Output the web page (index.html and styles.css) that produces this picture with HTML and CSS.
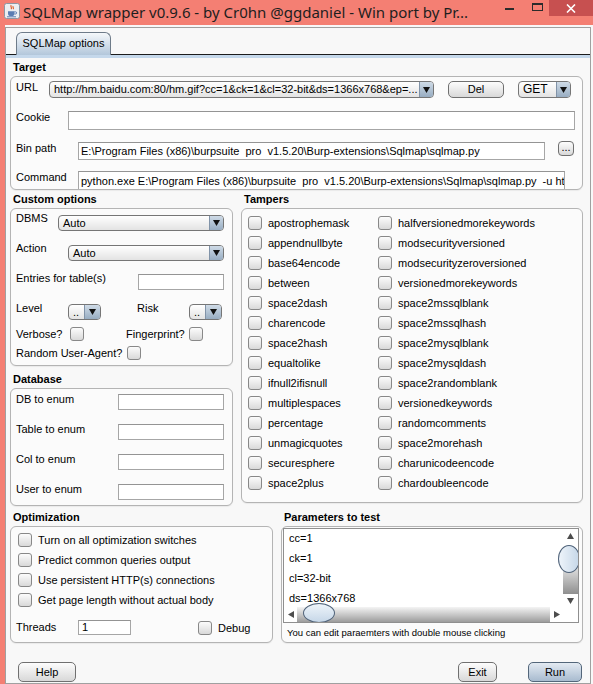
FILE: index.html
```html
<!DOCTYPE html>
<html>
<head>
<meta charset="utf-8">
<link rel="stylesheet" href="styles.css">
</head>
<body>
<div class="titlebar">
  <svg class="app-icon" width="16" height="16" viewBox="0 0 16 16">
    <rect x="0.5" y="0.5" width="15" height="15" rx="2" fill="#eceef1" stroke="#8d97a3"/>
    <path d="M7.2 2.2c-1.2 1.4 1.1 2.3 0 4M9.2 3.2c-.8 1 .8 1.8 0 3" stroke="#e0602c" stroke-width="1.2" fill="none"/>
    <path d="M4 8.2h6.5v2.2a2.8 2.8 0 0 1-2.8 2.6H6.8A2.8 2.8 0 0 1 4 10.4z" fill="#5a7db3"/>
    <path d="M10.5 8.8h1a1.1 1.1 0 0 1 0 2.2h-1" stroke="#5a7db3" fill="none"/>
    <path d="M3 13.8h9" stroke="#5a7db3"/>
  </svg>
  <span class="title">SQLMap wrapper v0.9.6 - by Cr0hn @ggdaniel - Win port by Pr...</span>
  <div class="caption">
    <span class="cmin"></span>
    <span class="cmax"></span>
    <span class="cclose"><svg width="10" height="9" viewBox="0 0 10 9"><path d="M1 0.5l8 8M9 0.5l-8 8" stroke="#fff" stroke-width="1.6"/></svg></span>
  </div>
</div>
<div class="client">
  <div class="lborder"></div>
  <div class="tabpane">
    <div class="tabs"><div class="tab">SQLMap options</div></div>
    <div class="tabstrip"></div>
    <div class="content">
      <div class="sec-title">Target</div>
      <div class="group target-box">
        <div class="row r-url">
          <span class="lbl w33">URL</span>
          <div class="combo w385"><span class="val">http://hm.baidu.com:80/hm.gif?cc=1&amp;ck=1&amp;cl=32-bit&amp;ds=1366x768&amp;ep=...</span><span class="arr"><svg width="7" height="6" viewBox="0 0 7 6"><path d="M0 0h7L3.5 6z" fill="#111"/></svg></span></div>
          <div class="btn btn-del">Del</div>
          <div class="combo w53 get"><span class="val">GET</span><span class="arr"><svg width="7" height="6" viewBox="0 0 7 6"><path d="M0 0h7L3.5 6z" fill="#111"/></svg></span></div>
        </div>
        <div class="row r-cookie">
          <span class="lbl w52">Cookie</span>
          <div class="field f-cookie"></div>
        </div>
        <div class="row r-bin">
          <span class="lbl w62">Bin path</span>
          <div class="field f-bin">E:\Program Files (x86)\burpsuite  pro  v1.5.20\Burp-extensions\Sqlmap\sqlmap.py</div>
          <div class="btn btn-dots">...</div>
        </div>
        <div class="row r-cmd">
          <span class="lbl w62">Command</span>
          <div class="field f-cmd">python.exe E:\Program Files (x86)\burpsuite  pro  v1.5.20\Burp-extensions\Sqlmap\sqlmap.py  -u http</div>
        </div>
      </div>

      <div class="columns">
        <div class="col-left">
          <div class="sec-title">Custom options</div>
          <div class="group custom-box">
            <div class="row r30">
              <span class="lbl w42">DBMS</span>
              <div class="combo w166 mt3"><span class="val">Auto</span><span class="arr"><svg width="7" height="6" viewBox="0 0 7 6"><path d="M0 0h7L3.5 6z" fill="#111"/></svg></span></div>
            </div>
            <div class="row r30">
              <span class="lbl w52">Action</span>
              <div class="combo w156 mt3"><span class="val">Auto</span><span class="arr"><svg width="7" height="6" viewBox="0 0 7 6"><path d="M0 0h7L3.5 6z" fill="#111"/></svg></span></div>
            </div>
            <div class="row r30">
              <span class="lbl w122">Entries for table(s)</span>
              <div class="field f-entries"></div>
            </div>
            <div class="row r24">
              <span class="lbl w52">Level</span>
              <div class="combo small mt2"><span class="val">..</span><span class="arr"><svg width="7" height="6" viewBox="0 0 7 6"><path d="M0 0h7L3.5 6z" fill="#111"/></svg></span></div>
              <span class="lbl w52 ml36">Risk</span>
              <div class="combo small mt2"><span class="val">..</span><span class="arr"><svg width="7" height="6" viewBox="0 0 7 6"><path d="M0 0h7L3.5 6z" fill="#111"/></svg></span></div>
            </div>
            <div class="row rcheck">
              <span class="lbl w54">Verbose?</span>
              <span class="cb"></span>
              <span class="lbl w63 ml42">Fingerprint?</span>
              <span class="cb"></span>
            </div>
            <div class="row rcheck mt3">
              <span class="lbl w111">Random User-Agent?</span>
              <span class="cb"></span>
            </div>
          </div>

          <div class="sec-title db-title">Database</div>
          <div class="group db-box">
            <div class="row rdb"><span class="lbl w102">DB to enum</span><div class="field f-db"></div></div>
            <div class="row rdb"><span class="lbl w102">Table to enum</span><div class="field f-db"></div></div>
            <div class="row rdb"><span class="lbl w102">Col to enum</span><div class="field f-db"></div></div>
            <div class="row rdb"><span class="lbl w102">User to enum</span><div class="field f-db"></div></div>
          </div>
        </div>

        <div class="col-right">
          <div class="sec-title">Tampers</div>
          <div class="group tampers-box">
            <div class="titem"><span class="cb"></span><span class="tl">apostrophemask</span></div>
            <div class="titem"><span class="cb"></span><span class="tl">halfversionedmorekeywords</span></div>
            <div class="titem"><span class="cb"></span><span class="tl">appendnullbyte</span></div>
            <div class="titem"><span class="cb"></span><span class="tl">modsecurityversioned</span></div>
            <div class="titem"><span class="cb"></span><span class="tl">base64encode</span></div>
            <div class="titem"><span class="cb"></span><span class="tl">modsecurityzeroversioned</span></div>
            <div class="titem"><span class="cb"></span><span class="tl">between</span></div>
            <div class="titem"><span class="cb"></span><span class="tl">versionedmorekeywords</span></div>
            <div class="titem"><span class="cb"></span><span class="tl">space2dash</span></div>
            <div class="titem"><span class="cb"></span><span class="tl">space2mssqlblank</span></div>
            <div class="titem"><span class="cb"></span><span class="tl">charencode</span></div>
            <div class="titem"><span class="cb"></span><span class="tl">space2mssqlhash</span></div>
            <div class="titem"><span class="cb"></span><span class="tl">space2hash</span></div>
            <div class="titem"><span class="cb"></span><span class="tl">space2mysqlblank</span></div>
            <div class="titem"><span class="cb"></span><span class="tl">equaltolike</span></div>
            <div class="titem"><span class="cb"></span><span class="tl">space2mysqldash</span></div>
            <div class="titem"><span class="cb"></span><span class="tl">ifnull2ifisnull</span></div>
            <div class="titem"><span class="cb"></span><span class="tl">space2randomblank</span></div>
            <div class="titem"><span class="cb"></span><span class="tl">multiplespaces</span></div>
            <div class="titem"><span class="cb"></span><span class="tl">versionedkeywords</span></div>
            <div class="titem"><span class="cb"></span><span class="tl">percentage</span></div>
            <div class="titem"><span class="cb"></span><span class="tl">randomcomments</span></div>
            <div class="titem"><span class="cb"></span><span class="tl">unmagicquotes</span></div>
            <div class="titem"><span class="cb"></span><span class="tl">space2morehash</span></div>
            <div class="titem"><span class="cb"></span><span class="tl">securesphere</span></div>
            <div class="titem"><span class="cb"></span><span class="tl">charunicodeencode</span></div>
            <div class="titem"><span class="cb"></span><span class="tl">space2plus</span></div>
            <div class="titem"><span class="cb"></span><span class="tl">chardoubleencode</span></div>
          </div>
        </div>
      </div>

      <div class="bottom">
        <div class="col-opt">
          <div class="sec-title">Optimization</div>
          <div class="group opt-box">
            <div class="oitem"><span class="cb"></span><span class="tl">Turn on all optimization switches</span></div>
            <div class="oitem"><span class="cb"></span><span class="tl">Predict common queries output</span></div>
            <div class="oitem"><span class="cb"></span><span class="tl">Use persistent HTTP(s) connections</span></div>
            <div class="oitem"><span class="cb"></span><span class="tl">Get page length without actual body</span></div>
            <div class="row rthreads">
              <span class="lbl w62">Threads</span>
              <div class="field f-threads">1</div>
              <span class="cb ml67"></span>
              <span class="tl">Debug</span>
            </div>
          </div>
        </div>
        <div class="col-params">
          <div class="sec-title">Parameters to test</div>
          <div class="group params-box">
            <div class="plist">
              <div class="pitems">
                <div class="pitem">cc=1</div>
                <div class="pitem">ck=1</div>
                <div class="pitem">cl=32-bit</div>
                <div class="pitem">ds=1366x768</div>
              </div>
              <div class="vsb">
                <svg class="sarr" width="7" height="6" viewBox="0 0 7 6"><path d="M3.5 0L7 6H0z" fill="#4d4d4d"/></svg>
                <div class="vtrack"><div class="vthumb"></div></div>
                <svg class="sarr" width="7" height="6" viewBox="0 0 7 6"><path d="M0 0h7L3.5 6z" fill="#4d4d4d"/></svg>
              </div>
              <div class="hsb">
                <svg class="sarr" width="6" height="7" viewBox="0 0 6 7"><path d="M0 3.5L6 0v7z" fill="#4d4d4d"/></svg>
                <div class="htrack"><div class="hthumb"></div></div>
                <svg class="sarr" width="6" height="7" viewBox="0 0 6 7"><path d="M6 3.5L0 0v7z" fill="#4d4d4d"/></svg>
              </div>
              <div class="corner"></div>
            </div>
            <div class="pnote">You can edit paraemters with double mouse clicking</div>
          </div>
        </div>
      </div>

      <div class="buttons">
        <div class="btn btn-help">Help</div>
        <div class="btn btn-exit">Exit</div>
        <div class="btn btn-run">Run</div>
      </div>
    </div>
  </div>
</div>
</body>
</html>
```
FILE: styles.css
```css
* { box-sizing: border-box; }
html, body { margin: 0; padding: 0; }
body {
  width: 593px;
  height: 684px;
  overflow: hidden;
  font-family: "Liberation Sans", Arial, sans-serif;
  font-size: 11px;
  color: #000;
  background: #f8f8f8;
}

/* title bar */
.titlebar {
  height: 25px;
  background: #f47f73;
  display: flex;
  align-items: flex-start;
}
.app-icon { flex: none; margin: 3px 0 0 4px; }
.title {
  flex: none;
  margin-left: 3px;
  font-family: "Noto Sans", "Open Sans", sans-serif;
  font-size: 15px;
  line-height: 24px;
  color: #1e1e1e;
  white-space: nowrap;
}
.caption { margin-left: auto; display: flex; align-items: flex-start; }
.cmin { width: 9px; height: 2px; margin: 8px 18px 0 0; background: #2b2b2b; }
.cmax { width: 11px; height: 8px; margin: 3px 6px 0 0; border: 1px solid #2b2b2b; border-top-width: 2px; }
.cclose {
  width: 44px; height: 16px; background: #c75050;
  display: flex; align-items: center; justify-content: center;
}

/* client / tab pane */
.client { display: flex; height: 659px; }
.lborder { width: 5px; flex: none; background: #f47f73; }
.tabpane {
  width: 586px;
  height: 657px;
  margin-top: 2px;
  border: 1px solid #a0a0a0;
  display: flex;
  flex-direction: column;
  background: #f8f8f8;
}
.tabs {
  flex: none;
  height: 27px;
  border-bottom: 1px solid #1c1c1c;
  display: flex;
  align-items: flex-end;
  padding-left: 10px;
}
.tab {
  width: 95px;
  height: 23px;
  margin-bottom: -1px;
  border: 1px solid #6e7b89;
  border-bottom: none;
  border-radius: 6px 6px 0 0;
  background: linear-gradient(#f5f8fb, #b3c7db);
  text-align: center;
  line-height: 21px;
}
.tabstrip { flex: none; height: 3px; background: #c5d8eb; }
.content { padding: 0 7px 0 4px; }

/* sections */
.sec-title {
  height: 18px;
  padding: 3px 0 0 3px;
  line-height: 13px;
  font-weight: bold;
  white-space: nowrap;
}
.group {
  border: 1px solid #b4b4b4;
  border-radius: 6px;
  background: #fbfbfb;
  box-shadow: 0 1px 1px rgba(0,0,0,0.06);
}

.row { display: flex; align-items: flex-start; }
.lbl { flex: none; line-height: 13px; white-space: nowrap; }
.w33 { width: 33px; } .w42 { width: 42px; } .w52 { width: 52px; } .w54 { width: 54px; }
.w62 { width: 62px; } .w63 { width: 63px; } .w102 { width: 102px; } .w111 { width: 111px; }
.w122 { width: 122px; }
.ml36 { margin-left: 36px; } .ml42 { margin-left: 42px; } .ml67 { margin-left: 67px; }
.mt2 { margin-top: 2px; } .mt3 { margin-top: 3px; }

/* controls */
.field {
  flex: none;
  background: #fff;
  border: 1px solid #a6a6a6;
  border-top-color: #949494;
  padding: 0 2px;
  white-space: pre;
  overflow: hidden;
}
.combo {
  flex: none;
  display: flex;
  height: 16px;
  border: 1px solid #767676;
  border-radius: 4px;
  background: linear-gradient(#ffffff, #e3e3e3);
  overflow: hidden;
}
.combo .val {
  flex: 1;
  padding-left: 4px;
  line-height: 14px;
  white-space: nowrap;
  overflow: hidden;
}
.combo .arr {
  flex: none;
  width: 14px;
  border-left: 1px solid #8193a8;
  background: linear-gradient(#cfdbe7, #98adc2);
  display: flex;
  align-items: center;
  justify-content: center;
}
.combo.small { width: 33px; }
.combo.small .arr { width: 16px; }
.w385 { width: 385px; height: 17px; }
.w53 { width: 53px; height: 17px; }
.w166 { width: 166px; }
.w156 { width: 156px; }
.get { margin-left: 14px; }
.get .val { font-size: 12px; }
.w385 .val, .w53 .val { line-height: 15px; }

.btn {
  flex: none;
  border: 1px solid #707070;
  border-radius: 5px;
  background: linear-gradient(#fdfdfd, #d8d8d8);
  text-align: center;
}
.cb {
  flex: none;
  width: 14px;
  height: 14px;
  border: 1px solid #888;
  border-radius: 3px;
  background: linear-gradient(#fcfcfc, #d9d9d9);
}
.tl { margin-left: 6px; white-space: nowrap; }

/* target */
.target-box { height: 114px; padding: 4px 0 0 5px; overflow: hidden; }
.r-url { height: 17px; }
.btn-del { margin-left: 14px; width: 56px; height: 17px; line-height: 15px; }
.r-cookie { margin-top: 13px; height: 19px; }
.f-cookie { width: 507px; height: 19px; }
.r-bin { margin-top: 12px; height: 18px; }
.f-bin { width: 467px; height: 18px; line-height: 16px; }
.btn-dots { margin: -1px 0 0 13px; width: 16px; height: 15px; line-height: 11px; border-radius: 4px; }
.r-cmd { margin-top: 11px; height: 22px; }
.f-cmd { width: 487px; height: 22px; line-height: 18px; }

/* columns */
.columns { display: flex; gap: 8px; }
.col-left { width: 223px; flex: none; }
.col-right { width: 342px; flex: none; }

.custom-box { height: 158px; padding: 3px 0 0 5px; }
.r30 { height: 30px; }
.r24 { height: 24px; }
.rcheck { height: 16px; align-items: center; }
.f-entries { width: 86px; height: 16px; margin-top: 2px; }

.db-title { margin-top: 4px; }
.db-box { height: 118px; padding: 4px 0 0 5px; display: flex; flex-direction: column; gap: 13px; }
.rdb { height: 17px; }
.f-db { width: 106px; height: 16px; margin-top: 1px; }

.tampers-box {
  height: 295px;
  padding: 4px 0 0 6px;
  display: grid;
  grid-template-columns: 130px auto;
  grid-auto-rows: 20px;
  align-content: start;
}
.titem { display: flex; align-items: center; }

/* bottom */
.bottom { margin-top: 2px; display: flex; gap: 8px; }
.col-opt { width: 263px; flex: none; }
.col-params { width: 302px; flex: none; }
.opt-box { height: 117px; padding: 3px 0 0 7px; }
.oitem { height: 20px; display: flex; align-items: center; }
.rthreads { margin: 9px 0 0 -2px; height: 17px; align-items: center; }
.f-threads { width: 53px; height: 15px; line-height: 13px; padding-left: 3px; }

.params-box { height: 117px; padding: 1px 3px 0 1px; }
.plist {
  height: 95px;
  border: 1px solid #8f8f8f;
  background: #fff;
  display: grid;
  grid-template-columns: 1fr 15px;
  grid-template-rows: 1fr 15px;
  overflow: hidden;
}
.pitems { padding: 0 0 0 5px; overflow: hidden; }
.pitem { height: 20px; line-height: 20px; margin-top: -1px; margin-bottom: 1px; white-space: nowrap; }
.vsb { display: flex; flex-direction: column; align-items: center; background: #fff; }
.vsb .sarr { flex: none; margin: 4px 0 3px; }
.vtrack {
  flex: 1;
  width: 15px;
  background: linear-gradient(#ffffff 0%, #ffffff 20%, #cfcfcf 60%, #8f8f8f 100%);
  display: flex;
  flex-direction: column;
  align-items: flex-end;
}
.vthumb {
  margin-top: 3px;
  width: 22px;
  height: 28px;
  margin-right: -2px;
  border: 1px solid #50637a;
  border-radius: 50%;
  background: linear-gradient(to right, #eef4fa, #c6d7e8);
}
.hsb { display: flex; align-items: center; background: #fff; }
.hsb .sarr { flex: none; margin: 0 3px 0 4px; }
.htrack {
  flex: 1;
  height: 15px;
  background: linear-gradient(#f4f4f4, #c0c0c0 60%, #9c9c9c);
  display: flex;
  align-items: flex-end;
}
.hthumb {
  margin-left: 6px;
  width: 32px;
  height: 20px;
  margin-bottom: -1px;
  border: 1px solid #50637a;
  border-radius: 50%;
  background: linear-gradient(#eef4fa, #c6d7e8);
}
.corner { background: #fff; }
.pnote { padding-left: 4px; font-size: 9.5px; line-height: 20px; white-space: nowrap; }

.buttons { margin-top: 19px; display: flex; padding-left: 8px; }
.buttons .btn { height: 20px; line-height: 18px; }
.btn-help { width: 58px; }
.btn-exit { width: 39px; margin-left: auto; }
.btn-run {
  width: 54px;
  margin: 0 1px 0 31px;
  border-color: #53667a;
  background: linear-gradient(#e3eaf2, #a8bbcf);
}
```
